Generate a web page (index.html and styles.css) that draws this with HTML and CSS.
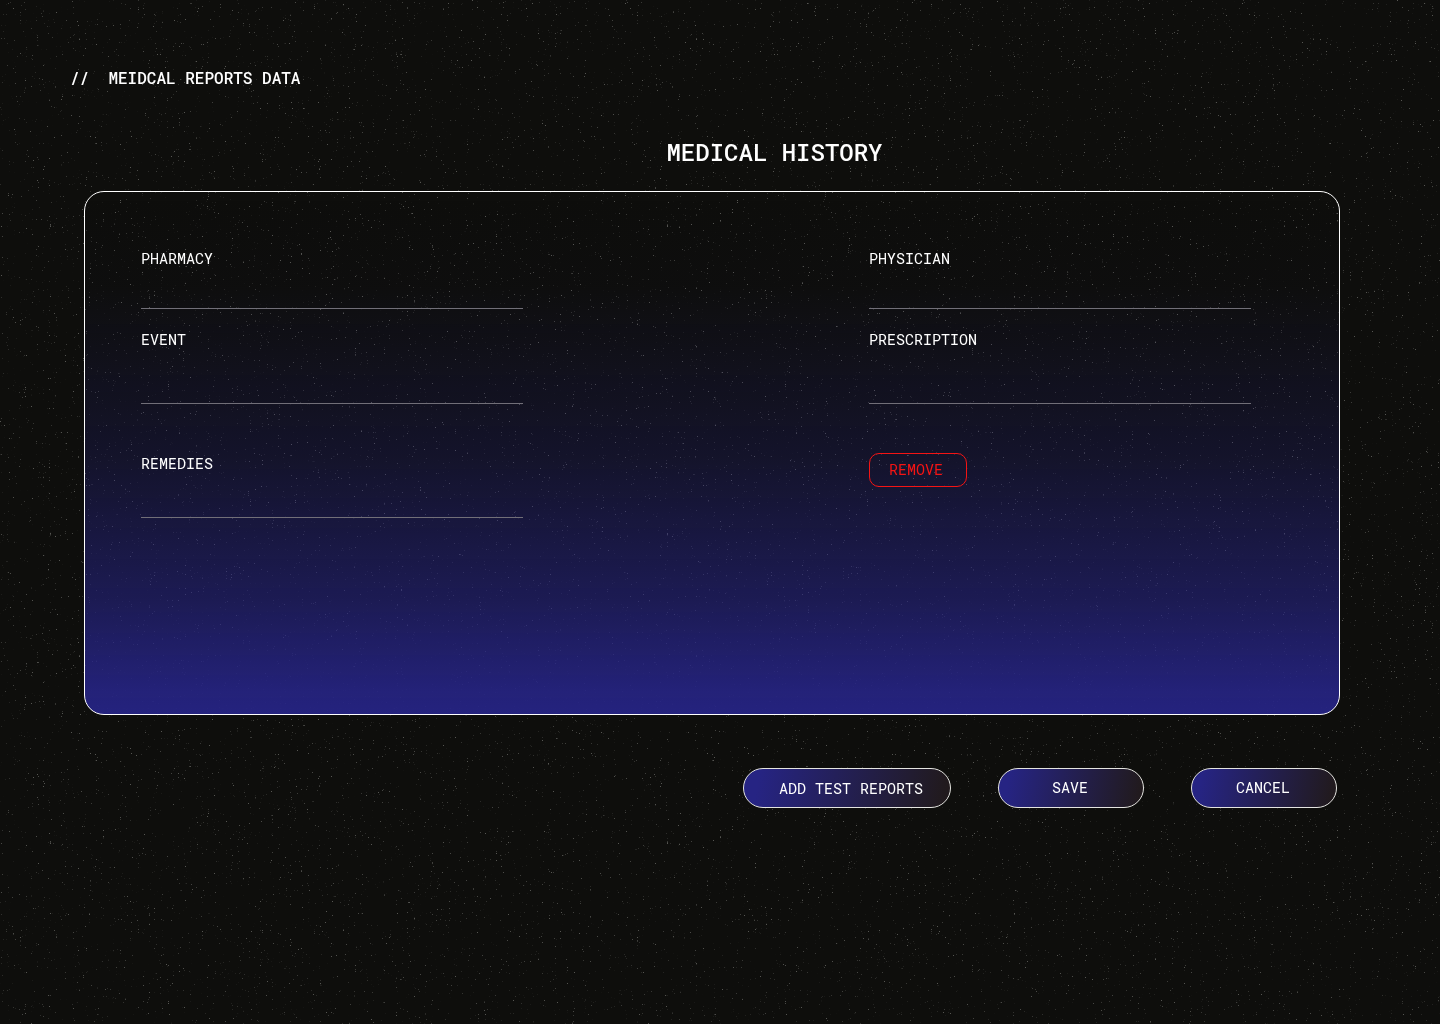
FILE: index.html
```
<!DOCTYPE html>
<html lang="en">
<head>
  <meta charset="utf-8">
  <meta name="viewport" content="width=device-width, initial-scale=1">
  <title>Medical Reports Data</title>
  <link rel="stylesheet" href="styles.css">
</head>
<body>
  <svg class="grain" aria-hidden="true">
    <filter id="specks" x="0" y="0" width="100%" height="100%" color-interpolation-filters="sRGB">
      <feTurbulence type="fractalNoise" baseFrequency="0.83" numOctaves="2" seed="7"/>
      <feColorMatrix values="0 0 0 0 0.62  0 0 0 0 0.62  0 0 0 0 0.6  6 6 0 0 -7.95"/>
      <feComponentTransfer><feFuncA type="linear" slope="0.5"/></feComponentTransfer>
    </filter>
    <rect width="100%" height="100%" filter="url(#specks)"/>
  </svg>

  <main class="page">
    <header class="crumb">//  MEIDCAL REPORTS DATA</header>

    <form class="report">
      <h1 class="title">MEDICAL HISTORY</h1>

      <section class="panel">
        <div class="field">
          <label for="pharmacy">PHARMACY</label>
          <input id="pharmacy" type="text">
        </div>
        <div class="field">
          <label for="physician">PHYSICIAN</label>
          <input id="physician" type="text">
        </div>
        <div class="field">
          <label for="event">EVENT</label>
          <input id="event" type="text">
        </div>
        <div class="field">
          <label for="prescription">PRESCRIPTION</label>
          <input id="prescription" type="text">
        </div>
        <div class="field field-last">
          <label for="remedies">REMEDIES</label>
          <input id="remedies" type="text">
        </div>
        <div class="field-last">
          <button class="remove" type="button">REMOVE</button>
        </div>
      </section>

      <div class="actions">
        <button class="pill pill-wide" type="button">ADD TEST REPORTS</button>
        <button class="pill" type="submit">SAVE</button>
        <button class="pill" type="button">CANCEL</button>
      </div>
    </form>
  </main>
</body>
</html>
```
FILE: styles.css
```
* {
  box-sizing: border-box;
}

body {
  margin: 0;
  min-height: 100vh;
  background: #0e0e0c;
  color: #fff;
  font-family: "Roboto Mono", "DejaVu Sans Mono", "Liberation Mono", monospace;
  font-size: 15px;
  line-height: 20px;
}

button,
input {
  font: inherit;
  color: inherit;
}

/* Speckled backdrop behind the whole page */
.grain {
  position: fixed;
  inset: 0;
  z-index: -1;
  width: 100%;
  height: 100%;
}

.page {
  padding: 68px 100px 40px 84px;
}

.crumb {
  margin-left: -14px;
  font-size: 16px;
  font-weight: 500;
  white-space: pre;
}

.title {
  margin: 48px 0 23px;
  padding-left: 125px;
  font-size: 24px;
  font-weight: 500;
  line-height: 32px;
  text-align: center;
}

.panel {
  display: grid;
  grid-template-columns: minmax(0, 382px) minmax(0, 382px);
  grid-template-rows: 61px 75px auto;
  justify-content: space-between;
  align-content: start;
  gap: 20px;
  min-height: 524px;
  padding: 56px 88px 56px 56px;
  border: 1px solid #fff;
  border-radius: 20px;
  background: linear-gradient(
    rgba(38, 36, 131, 0) 0%,
    rgba(38, 36, 131, 0.02) 18%,
    rgba(38, 36, 131, 0.25) 50%,
    rgba(38, 36, 131, 0.6) 78%,
    rgba(38, 36, 131, 0.92) 96%,
    rgba(38, 36, 131, 0.96) 100%
  );
}

.field {
  display: flex;
  flex-direction: column;
}

.field input {
  flex: 1;
  min-height: 40px;
  width: 100%;
  padding: 4px 0;
  border: 0;
  border-bottom: 1px solid #716f78;
  background: transparent;
  outline: 0;
}

.field-last {
  min-height: 65px;
  margin-top: 29px;
}

.remove {
  width: 98px;
  height: 34px;
  padding: 0 4px 2px 0;
  border: 1px solid #f51414;
  border-radius: 10px;
  background: transparent;
  color: #f51414;
}

.actions {
  display: flex;
  flex-wrap: wrap;
  justify-content: flex-end;
  gap: 47px;
  margin: 53px 3px 0 0;
}

.pill {
  width: 146px;
  height: 40px;
  padding: 0 2px 2px 0;
  border: 1px solid #e4e4e0;
  border-radius: 20px;
  background: linear-gradient(100deg, #262483 8%, #211a1d 96%) border-box;
}

.pill-wide {
  width: 208px;
  padding: 0 0 0 8px;
}
```
